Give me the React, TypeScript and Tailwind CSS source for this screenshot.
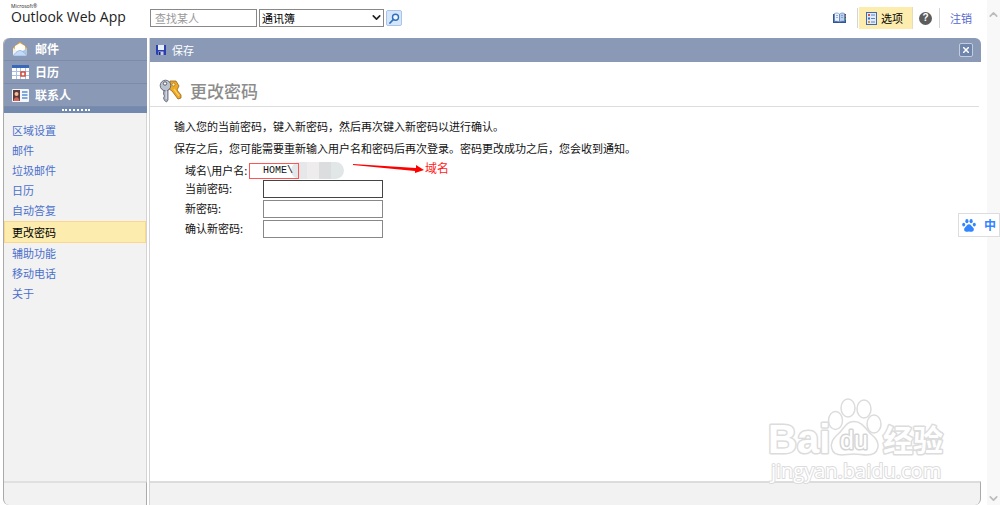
import type { ReactNode } from "react";
import { ChevronDown, ChevronUp } from "lucide-react";

// Outlook Web App, options > change password.

const FOLDERS = [
  { label: "邮件", icon: <MailIcon /> },
  { label: "日历", icon: <CalendarIcon /> },
  { label: "联系人", icon: <ContactIcon /> },
];

const OPTIONS = [
  "区域设置",
  "邮件",
  "垃圾邮件",
  "日历",
  "自动答复",
  "更改密码",
  "辅助功能",
  "移动电话",
  "关于",
];
const ACTIVE = "更改密码";

const FIELDS = [
  { id: "current", label: "当前密码:", border: "border-[#444]" },
  { id: "next", label: "新密码:", border: "border-[#888]" },
  { id: "confirm", label: "确认新密码:", border: "border-[#888]" },
];

function MailIcon() {
  return (
    <svg width="16" height="16" viewBox="0 0 16 16">
      <path d="M1 7L8 1L15 7V14H1Z" fill="#f3b755" stroke="#d99a3c" strokeWidth="0.6" />
      <path d="M3 5L8 2.200L13 5V10H3Z" fill="#fffdf5" />
      <path d="M1 7L6 10.5L1 14.5Z" fill="#e9f2fd" />
      <path d="M15 7L10 10.5L15 14.5Z" fill="#a9c9ee" />
      <path d="M1 15C4 11 6 9.5 8 9.5S12 11 15 15Z" fill="#c4dbf7" stroke="#7fa5d6" strokeWidth="0.6" />
    </svg>
  );
}

function CalendarIcon() {
  return (
    <svg width="17" height="14" viewBox="0 0 17 14">
      <rect width="17" height="14" fill="#fff" />
      <rect width="17" height="3" fill="#3a68b8" />
      <path d="M0 6.5H17M0 10.5H17M4.5 3V14M8.5 3V14M13.5 3V14" stroke="#a9c0e6" />
      <rect x="9" y="7" width="4" height="4" fill="#fff" stroke="#d8432b" strokeWidth="1.4" />
    </svg>
  );
}

function ContactIcon() {
  return (
    <svg width="17" height="13" viewBox="0 0 17 13">
      <rect width="17" height="13" rx="1" fill="#f4f8fd" />
      <rect x="1" y="1" width="7" height="11" fill="#5b3c3c" />
      <circle cx="4.500" cy="5" r="2" fill="#f2bd97" />
      <path d="M1.5 12C2 7 7 7 7.5 12Z" fill="#d5655b" />
      <path d="M10 3H15.5M10 6H15.5M10 9H15.5" stroke="#5a8bd4" strokeWidth="1.4" />
    </svg>
  );
}

function SaveIcon() {
  return (
    <svg width="10" height="10" viewBox="0 0 10 10">
      <path d="M0 0H10V10H1L0 9Z" fill="#2c3fae" />
      <rect x="2" y="0" width="6" height="5" fill="#e6edfb" />
      <rect x="2.5" y="6.5" width="5" height="3.5" fill="#c5cde6" />
      <rect x="3" y="7" width="1.5" height="3" fill="#1b2670" />
    </svg>
  );
}

function KeysIcon() {
  return (
    <svg width="24" height="24" viewBox="0 0 24 24">
      <path d="M11 2L17 2L20 7L18 11L22 16V19L19 20L13 12L10 10Z" fill="#f0a81f" stroke="#8f6420" strokeWidth="0.8" />
      <circle cx="14.5" cy="5.5" r="1.5" fill="#fff2c4" stroke="#8f6420" strokeWidth="0.6" />
      <path d="M15 10L20 17" stroke="#ffd877" strokeWidth="1.2" />
      <path d="M5 10H9L9 21L7.5 23L5.5 21.5L4.5 19L5.5 17L4.5 15Z" fill="#a9b0bf" stroke="#5a5f70" strokeWidth="0.8" />
      <circle cx="6.5" cy="6.5" r="5.3" fill="#bcc3cf" stroke="#5a5f70" strokeWidth="0.9" />
      <circle cx="6" cy="4.5" r="1.7" fill="#fff" stroke="#4c505c" strokeWidth="0.9" />
      <path d="M7.2 11V20" stroke="#eceff5" strokeWidth="0.9" />
    </svg>
  );
}

function BookIcon() {
  return (
    <svg width="13" height="12" viewBox="0 0 13 12">
      <path d="M0 2V11H13V2Z" fill="#2f5596" />
      <path d="M1.5 1.5C3.5 0.5 5.5 1 6.5 2.2V10C5 9 3 9 1.5 9.5Z" fill="#eaf2fc" stroke="#5579b5" strokeWidth="0.6" />
      <path d="M11.5 1.5C9.5 0.5 7.5 1 6.5 2.2V10C8 9 10 9 11.5 9.5Z" fill="#b9d0f0" stroke="#5579b5" strokeWidth="0.6" />
      <path d="M3 3.5H5M3 5.5H5M8 3.5H10M8 5.5H10" stroke="#6e91c8" strokeWidth="0.7" />
      <path d="M12.3 3V5" stroke="#d2683c" />
      <path d="M12.3 6V8" stroke="#4fa35a" />
    </svg>
  );
}

function OptionsIcon() {
  return (
    <svg width="11" height="13" viewBox="0 0 11 13">
      <rect x="0.5" y="0.5" width="10" height="12" fill="#dfeafa" stroke="#4467a8" />
      <rect x="2" y="2" width="2" height="2" fill="#d8573b" />
      <rect x="2" y="5.5" width="2" height="2" fill="#3668bd" />
      <rect x="2" y="9" width="2" height="2" fill="#e0962f" />
      <path d="M5 3H9M5 6.5H9M5 10H9" stroke="#5c84c6" strokeWidth="1.2" />
    </svg>
  );
}

function SearchIcon() {
  return (
    <svg width="11" height="11" viewBox="0 0 11 11" fill="none">
      <circle cx="6.5" cy="4.2" r="3" fill="#f2f9ff" stroke="#2f6fc0" strokeWidth="1.4" />
      <path d="M4.3 6.5L1 10" stroke="#2f6fc0" strokeWidth="1.8" strokeLinecap="round" />
    </svg>
  );
}

function PawIcon() {
  return (
    <svg width="14" height="13" viewBox="0 0 14 13" fill="#3385ff">
      <ellipse cx="4.9" cy="2.2" rx="1.6" ry="2.1" />
      <ellipse cx="9.1" cy="2.2" rx="1.6" ry="2.1" />
      <ellipse cx="1.7" cy="5.6" rx="1.5" ry="1.9" />
      <ellipse cx="12.3" cy="5.6" rx="1.5" ry="1.9" />
      <path d="M7 5.2C8.8 5.2 9.3 7.1 10.8 8.3C12.7 9.9 11.9 12.7 9.7 12.7C8.6 12.7 8 12.4 7 12.4S5.4 12.7 4.3 12.7C2.1 12.7 1.3 9.9 3.2 8.3C4.7 7.1 5.2 5.2 7 5.2Z" />
    </svg>
  );
}

function Watermark() {
  return (
    <svg
      className="pointer-events-none absolute right-[52px] bottom-4 font-['Liberation_Sans','Noto_Sans_CJK_SC',sans-serif]"
      width="180"
      height="92"
      viewBox="0 0 180 92"
      fill="#fff"
      stroke="#dcdcdc"
      strokeWidth="1.5"
      strokeLinejoin="round"
    >
      <ellipse cx="67.5" cy="23.5" rx="7" ry="9" />
      <ellipse cx="80" cy="11" rx="7" ry="9" />
      <ellipse cx="96" cy="12" rx="7" ry="9" />
      <ellipse cx="106" cy="27" rx="7" ry="9" />
      <path d="M86 24.5C95 24.5 98 33 104 38C114 46 111 58 99 58C94 58 91 57 86 57S78 58 74 58C62 58 60 46 69 38C76 33 77 24.5 86 24.5Z" />
      <text x="0" y="56" fontSize="40" fontWeight="700" paintOrder="stroke" strokeWidth="3">Bai</text>
      <text x="72" y="52" fontSize="25" stroke="#d4d4d4" paintOrder="stroke" strokeWidth="3">du</text>
      <text x="115" y="54" fontSize="30" fontWeight="700" paintOrder="stroke" strokeWidth="3">经验</text>
      <text
        x="3"
        y="81"
        fontSize="20"
        paintOrder="stroke"
        strokeWidth="2"
        className="font-['Open_Sans',sans-serif]"
      >
        jingyan.baidu.com
      </text>
    </svg>
  );
}

function ToolButton({ label, children }: { label: string; children: ReactNode }) {
  return (
    <button type="button" aria-label={label} className="flex items-center">
      {children}
    </button>
  );
}

function Header() {
  return (
    <header className="mb-[2px] flex h-9 items-center pr-[9px]">
      <div className="w-[147px] pb-2 pl-2 font-['Open_Sans',sans-serif] text-[#222]">
        <div className="h-[5px] text-[5px] leading-[5px]">Microsoft®</div>
        <div className="text-[14px] leading-4 whitespace-nowrap">Outlook Web App</div>
      </div>
      <input
        type="text"
        aria-label="查找某人"
        placeholder="查找某人"
        className="h-[18px] w-[107px] border border-[#888] px-1 placeholder:text-[#999]"
      />
      <div className="relative ml-[2px]">
        <select
          aria-label="搜索范围"
          className="block h-[18px] w-[125px] appearance-none border border-[#888] bg-white px-[2px] leading-4 text-black"
        >
          <option>通讯簿</option>
        </select>
        <ChevronDown
          size={13}
          strokeWidth={3}
          className="pointer-events-none absolute top-[2px] right-[1px] text-[#222]"
        />
      </div>
      <button
        type="button"
        aria-label="搜索"
        className="ml-[2px] flex size-4 items-center justify-center rounded-xs border border-[#a9c4e8] bg-[#d6e6fa]"
      >
        <SearchIcon />
      </button>

      <div className="ml-auto flex items-center">
        <ToolButton label="通讯簿">
          <BookIcon />
        </ToolButton>
        <div className="ml-[11px] h-5 w-px bg-[#d5d5d5]" />
        <button
          type="button"
          className="ml-px flex h-[22px] items-center gap-1 border-r border-[#e3dcc0] bg-[#fcecad] pr-[9px] pl-[7px] text-black"
        >
          <OptionsIcon />
          选项
        </button>
        <button
          type="button"
          aria-label="帮助"
          className="ml-[6px] flex size-[13px] items-center justify-center rounded-full bg-[#5c5c5c] font-['Liberation_Sans',sans-serif] text-[10px] font-bold text-white"
        >
          ?
        </button>
        <div className="ml-[7px] h-5 w-px bg-[#d5d5d5]" />
        <a href="#logoff" className="ml-[10px] text-[#5566cc]">
          注销
        </a>
      </div>
    </header>
  );
}

function Sidebar() {
  return (
    <aside className="flex w-36 shrink-0 flex-col rounded-tl-md rounded-bl-md border-l border-[#aaa] bg-[#f2f2f2]">
      <nav className="overflow-hidden rounded-tl-md bg-[#8999b6]">
        {FOLDERS.map((f) => (
          <a
            key={f.label}
            href="#folder"
            className="flex h-[23px] items-center border-b border-[#7b8cab] pl-2 text-[12px] font-bold text-white"
          >
            <span className="flex w-[23px] items-center">{f.icon}</span>
            {f.label}
          </a>
        ))}
        <div className="flex h-[6px] items-center justify-center bg-[#7389ae]">
          <div className="w-7 border-t-2 border-dotted border-white" />
        </div>
      </nav>
      <nav className="flex grow flex-col border-r border-[#d4d4d4] pt-[7px]">
        {OPTIONS.map((o) =>
          o === ACTIVE ? (
            <a
              key={o}
              href="#option"
              aria-current="page"
              className="mt-px flex h-[22px] items-center border border-[#fbd78c] bg-[#fcecad] pl-[7px] text-black"
            >
              {o}
            </a>
          ) : (
            <a key={o} href="#option" className="flex h-5 items-center pl-2 text-[#4a70cc]">
              {o}
            </a>
          ),
        )}
      </nav>
      <div className="h-6 rounded-bl-md border-t-2 border-r border-t-[#e0e0e0] border-r-[#aaa]" />
    </aside>
  );
}

function PasswordForm() {
  return (
    <form className="grid grid-cols-[78px_auto] gap-y-[2px] pt-[3px] pl-[11px]">
      <span>域名\用户名:</span>
      <div className="relative flex h-4 items-center">
        {/* red callout around the domain, smudge over the account name */}
        <div className="absolute top-0 left-7 flex h-[17px] w-[53px] overflow-hidden rounded-full">
          <div className="w-4 bg-[#e6e7e9]" />
          <div className="w-3 bg-[#eeecec]" />
          <div className="w-3 bg-[#dcdddf]" />
          <div className="grow bg-[#e1e6e6]" />
        </div>
        <span className="relative w-[90px] pt-[2px] font-['Liberation_Mono',monospace] text-[10px]">
          HOME\
        </span>
        <div className="absolute top-[1px] -left-[14px] h-4 w-[50px] border border-[#f55]" />
        <svg width="72" height="12" viewBox="0 0 72 12" fill="#f00" className="mb-[6px] shrink-0">
          <path d="M0 3L63 7V4L71 9L62 12V10L0 4Z" />
        </svg>
        <span className="mb-1 text-[12px] whitespace-nowrap text-[#f22]">域名</span>
      </div>
      {FIELDS.map((f) => (
        <div key={f.id} className="contents">
          <label htmlFor={f.id}>{f.label}</label>
          <input id={f.id} type="password" className={`h-[18px] w-[120px] border ${f.border}`} />
        </div>
      ))}
    </form>
  );
}

export default function App() {
  return (
    <div className="relative flex min-h-screen bg-white font-['Noto_Sans_CJK_SC',sans-serif] text-[11px] leading-4 text-[#111]">
      <div className="flex grow flex-col pl-[3px]">
        <Header />
        <div className="flex grow gap-[2px]">
          <Sidebar />
          <main className="flex grow flex-col border-l border-[#d4d4d4]">
            <div className="flex h-6 items-center rounded-tr-md bg-[#8999b6] pr-2 pl-[6px] text-white">
              <button type="button" className="flex items-center gap-[6px]">
                <SaveIcon />
                保存
              </button>
              <button
                type="button"
                aria-label="关闭"
                className="ml-auto flex size-[14px] items-center justify-center rounded-xs border border-[#c3cde0] bg-[#7085ab]"
              >
                <svg width="6" height="6" viewBox="0 0 6 6" stroke="#fff" strokeWidth="1.5">
                  <path d="M0 0L6 6M6 0L0 6" />
                </svg>
              </button>
            </div>
            <div className="mr-[2px] flex h-[45px] items-end gap-[7px] border-b border-[#ddd] pb-[3px] pl-[9px]">
              <KeysIcon />
              <h1 className="text-[17px] leading-6 font-medium text-[#8c8c8c]">更改密码</h1>
            </div>
            <div className="grow pt-2 pl-6">
              <p className="leading-[22px]">输入您的当前密码，键入新密码，然后再次键入新密码以进行确认。</p>
              <p className="leading-[22px]">
                保存之后，您可能需要重新输入用户名和密码后再次登录。密码更改成功之后，您会收到通知。
              </p>
              <PasswordForm />
            </div>
            <div className="h-6 rounded-br-md border-t-2 border-r border-t-[#dcdcdc] border-r-[#aaa] bg-[#f2f2f2]" />
          </main>
        </div>
      </div>
      <div className="ml-[6px] flex w-[13px] shrink-0 flex-col items-center justify-between bg-[#f8f8f8] pt-2 text-[#bbb]">
        <ChevronUp size={13} strokeWidth={3} />
        <ChevronDown size={13} strokeWidth={3} />
      </div>
      <Watermark />
      <button
        type="button"
        className="absolute top-[213px] right-0 flex h-6 w-[42px] items-center justify-center gap-2 border border-[#ddd] bg-white text-[12px] font-bold text-[#3385ff]"
      >
        <PawIcon />中
      </button>
    </div>
  );
}
